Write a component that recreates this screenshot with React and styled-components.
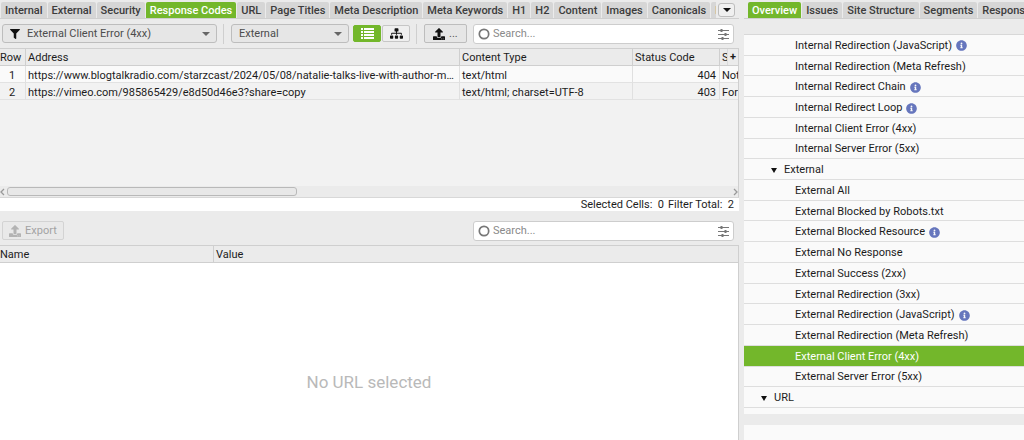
import React, { useState } from "react";
import styled, { createGlobalStyle, css } from "styled-components";
import { FaFilter, FaInfoCircle, FaSitemap, FaUpload } from "react-icons/fa";

const GlobalStyle = createGlobalStyle`
  * {
    box-sizing: border-box;
  }

  body {
    margin: 0;
    background: #ebebeb;
    color: #1c1c1c;
    font-family: Roboto, "Liberation Sans", sans-serif;
    font-size: 11px;
    line-height: 16px;
  }

  button, input, select {
    font: inherit;
    color: inherit;
    margin: 0;
  }
`;

const Layout = styled.div`
  display: flex;
  gap: 5px;
  height: 100vh;
  overflow: hidden;
`;

const MainPane = styled.main`
  flex: 1;
  min-width: 0;
  display: flex;
  flex-direction: column;
`;

const SidePane = styled.aside`
  width: 280px;
  flex-shrink: 0;
  display: flex;
  flex-direction: column;
`;

const TabBar = styled.div`
  display: flex;
  flex-shrink: 0;
  height: 19px;
  padding-top: 2px;
  border-bottom: 1px solid #cfcfcf;
`;

const TabList = styled.div`
  flex: 1;
  min-width: 0;
  display: flex;
  gap: 1px;
  padding-left: ${(props) => props.$inset}px;
  overflow: hidden;
`;

const Tab = styled.button`
  flex-shrink: 0;
  height: 16px;
  padding: 2px 4px 0;
  border: none;
  border-radius: 2px 2px 0 0;
  background: ${(props) => (props.$active ? "#73b72b" : "#d6d6d6")};
  color: ${(props) => (props.$active ? "#fff" : "#3c3c3c")};
  font-weight: 500;
  line-height: 14px;
  white-space: nowrap;
`;

const OverflowButton = styled.button`
  display: flex;
  align-items: center;
  justify-content: center;
  width: 17px;
  height: 14px;
  margin: 1px 4px 0 2px;
  padding: 0;
  border: 1px solid #bdbdbd;
  border-radius: 3px;
  background: #f0f0f0;
`;

const Caret = styled.span`
  flex-shrink: 0;
  border-left: ${(props) => props.$size}px solid transparent;
  border-right: ${(props) => props.$size}px solid transparent;
  border-top: ${(props) => props.$height}px solid ${(props) => props.$color};
`;

const Toolbar = styled.div`
  display: flex;
  align-items: center;
  flex-shrink: 0;
  height: ${(props) => props.$height}px;
  padding: ${(props) => props.$top || 0}px 5px 0 2px;
`;

const SelectBox = styled.label`
  display: flex;
  align-items: center;
  gap: 7px;
  width: ${(props) => props.$width}px;
  height: 19px;
  padding: 0 6px 0 7px;
  border: 1px solid #bdbdbd;
  border-radius: 3px;
  background: #e6e6e6;
  color: #4c4c4c;

  svg {
    color: #111;
    font-size: 10px;
    flex-shrink: 0;
  }
`;

const Select = styled.select`
  flex: 1;
  min-width: 0;
  padding: 0;
  border: none;
  outline: none;
  appearance: none;
  background: transparent;
`;

const Divider = styled.span`
  width: 1px;
  height: 20px;
  margin: 0 7px 0 6px;
  background: #cfcfcf;
`;

const ToggleGroup = styled.div`
  display: flex;
  gap: 1px;
  margin-left: 4px;
`;

const buttonBase = css`
  display: flex;
  align-items: center;
  justify-content: center;
  border-radius: 2px;
`;

const Toggle = styled.button`
  ${buttonBase}
  width: 28px;
  height: 17px;
  padding: 0;
  border: 1px solid ${(props) => (props.$active ? "#73b72b" : "#c6c6c6")};
  background: ${(props) => (props.$active ? "#73b72b" : "#efefef")};
  color: ${(props) => (props.$active ? "#fff" : "#111")};

  svg {
    font-size: 13px;
  }
`;

const ActionButton = styled.button`
  ${buttonBase}
  gap: 4px;
  height: 19px;
  padding: 0 ${(props) => props.$pad}px;
  border: 1px solid #bdbdbd;
  background: #e6e6e6;
  color: #555;

  svg {
    font-size: 12px;
    color: #111;
  }

  &:disabled {
    border-color: #d3d3d3;
    background: #e9e9e9;
    color: #a3a3a3;
  }

  &:disabled svg {
    color: #b3b3b3;
  }
`;

const SearchBox = styled.label`
  display: flex;
  align-items: center;
  gap: 3px;
  width: 261px;
  height: 20px;
  margin-left: auto;
  padding: 0 4px;
  border: 1px solid #cdcdcd;
  border-radius: 3px;
  background: #fff;
  color: #777;
`;

const SearchInput = styled.input`
  flex: 1;
  min-width: 0;
  padding: 0;
  border: none;
  outline: none;
  background: transparent;

  &::placeholder {
    color: #8a8a8a;
    opacity: 1;
  }
`;

const ResultsArea = styled.section`
  position: relative;
  flex-shrink: 0;
  height: 138px;
  border-top: 1px solid #cfcfcf;
  border-right: 1px solid #cfcfcf;
  background: #f2f2f2;
  overflow: hidden;
`;

const Table = styled.table`
  width: 100%;
  table-layout: fixed;
  border-collapse: separate;
  border-spacing: 0;
`;

const HeaderCell = styled.th`
  height: 17px;
  padding: 2px 2px 0;
  border-right: 1px solid #cfcfcf;
  border-bottom: 1px solid #cfcfcf;
  background: #ebebeb;
  font-weight: 400;
  line-height: 14px;
  text-align: left;
  white-space: nowrap;
  overflow: hidden;

  &:first-child {
    padding-left: 0;
  }

  &:last-child {
    border-right: none;
  }
`;

const Cell = styled.td`
  height: 17px;
  padding: 3px 3px 0 2px;
  border-right: 1px solid #e0e0e0;
  border-bottom: 1px solid #e2e2e2;
  background: ${(props) => (props.$alt ? "#f2f2f2" : "#fafafa")};
  line-height: 13px;
  text-align: ${(props) => props.$align || "left"};
  white-space: nowrap;
  overflow: hidden;
  text-overflow: ${(props) => (props.$clip ? "clip" : "ellipsis")};

  &:last-child {
    border-right: none;
  }
`;

const AddColumn = styled.button`
  position: absolute;
  top: 0;
  right: 0;
  width: 11px;
  height: 16px;
  padding: 0;
  border: none;
  border-left: 1px solid #dadada;
  background: #ebebeb;
  font-weight: 700;
  line-height: 14px;
`;

const ScrollBar = styled.div`
  display: flex;
  align-items: center;
  flex-shrink: 0;
  height: 12px;
  border-right: 1px solid #cfcfcf;
  border-bottom: 1px solid #d8d8d8;
  background: #ebebeb;
  color: #999;
`;

const ScrollTrack = styled.div`
  flex: 1;
  margin: 0 2px;
`;

const ScrollThumb = styled.div`
  width: 40%;
  height: 9px;
  border: 1px solid #b9b9b9;
  border-radius: 3px;
  background: #e8e8e8;
`;

const StatusBar = styled.div`
  display: flex;
  justify-content: flex-end;
  align-items: center;
  gap: 4px;
  flex-shrink: 0;
  height: 13px;
  padding-right: 5px;
  background: #fff;
  white-space: pre;
`;

const DetailArea = styled.section`
  flex-shrink: 0;
  border-top: 1px solid #cfcfcf;
  border-right: 1px solid #cfcfcf;
  background: #fff;
`;

const EmptyMessage = styled.p`
  display: flex;
  align-items: center;
  justify-content: center;
  height: 238px;
  margin: 0;
  color: #b9b9b9;
  font-size: 17px;
`;

const TreeHeader = styled.div`
  flex-shrink: 0;
  height: 16px;
  border-bottom: 1px solid #d8d8d8;
`;

const Tree = styled.ul`
  flex: 1;
  display: grid;
  grid-auto-rows: 1fr;
  margin: 0;
  padding: 0;
  list-style: none;
  background: #fafafa;
`;

const TreeRow = styled.li`
  display: flex;
  align-items: center;
  gap: ${(props) => (props.$branch ? 7 : 4)}px;
  padding-top: 2px;
  padding-left: ${(props) => props.$indent}px;
  border-bottom: 1px solid #dedede;
  background: ${(props) => (props.$selected ? "#73b72b" : "#fafafa")};
  color: ${(props) => (props.$selected ? "#fff" : "inherit")};
  white-space: nowrap;

  svg {
    font-size: 11px;
    color: #6676bd;
  }
`;

const TreeEnd = styled.div`
  flex-shrink: 0;
  height: 6px;
  background: #fafafa;
`;

const LowerPanel = styled.div`
  flex-shrink: 0;
  height: 15px;
  margin-top: 11px;
  background: #fafafa;
`;

const mainTabs = [
  "Internal", "External", "Security", "Response Codes", "URL", "Page Titles",
  "Meta Description", "Meta Keywords", "H1", "H2", "Content", "Images",
  "Canonicals", "Pagination",
];

const sideTabs = ["Overview", "Issues", "Site Structure", "Segments", "Response Times"];

const results = [
  {
    url: "https://www.blogtalkradio.com/starzcast/2024/05/08/natalie-talks-live-with-author-marilyn",
    type: "text/html",
    code: 404,
    status: "Not Found",
  },
  {
    url: "https://vimeo.com/985865429/e8d50d46e3?share=copy",
    type: "text/html; charset=UTF-8",
    code: 403,
    status: "Forbidden",
  },
];

const treeItems = [
  { label: "Internal Redirection (JavaScript)", info: true },
  { label: "Internal Redirection (Meta Refresh)" },
  { label: "Internal Redirect Chain", info: true },
  { label: "Internal Redirect Loop", info: true },
  { label: "Internal Client Error (4xx)" },
  { label: "Internal Server Error (5xx)" },
  { label: "External", branch: true, indent: 27 },
  { label: "External All" },
  { label: "External Blocked by Robots.txt" },
  { label: "External Blocked Resource", info: true },
  { label: "External No Response" },
  { label: "External Success (2xx)" },
  { label: "External Redirection (3xx)" },
  { label: "External Redirection (JavaScript)", info: true },
  { label: "External Redirection (Meta Refresh)" },
  { label: "External Client Error (4xx)" },
  { label: "External Server Error (5xx)" },
  { label: "URL", branch: true, indent: 17 },
];

const Tabs = ({ items, initial, inset, label }) => {
  const [active, setActive] = useState(initial);

  return (
    <TabList role="tablist" aria-label={label} $inset={inset}>
      {items.map((item) => (
        <Tab
          key={item}
          role="tab"
          aria-selected={item === active}
          $active={item === active}
          onClick={() => setActive(item)}
        >
          {item}
        </Tab>
      ))}
    </TabList>
  );
};

const Search = ({ label }) => (
  <SearchBox>
    <svg width="12" height="12" viewBox="0 0 12 12" fill="none" stroke="currentColor" strokeWidth="1.7">
      <circle cx="6" cy="6" r="4.7" />
    </svg>
    <SearchInput type="text" placeholder="Search..." aria-label={label} />
    <svg width="11" height="12" viewBox="0 0 11 12" fill="none" stroke="currentColor">
      <path d="M0 2.5h11M0 6.5h11M0 10.5h11" />
      <path d="M3.5 1v3M7.5 5v3M4.5 9v3" strokeWidth="2" />
    </svg>
  </SearchBox>
);

const ListIcon = () => (
  <svg width="13" height="11" viewBox="0 0 13 11" fill="currentColor">
    <path d="M0 0h2v2H0zM3 0h10v2H3zM0 3h2v2H0zM3 3h10v2H3zM0 6h2v2H0zM3 6h10v2H3zM0 9h2v2H0zM3 9h10v2H3z" />
  </svg>
);

const Chevron = ({ d }) => (
  <svg width="5" height="8" viewBox="0 0 5 8" fill="none" stroke="currentColor" strokeWidth="1.3">
    <path d={d} />
  </svg>
);

const App = () => {
  const [view, setView] = useState("list");
  const [selected, setSelected] = useState("External Client Error (4xx)");

  return (
    <>
      <GlobalStyle />
      <Layout>
        <MainPane>
          <TabBar>
            <Tabs items={mainTabs} initial="Response Codes" inset={1} label="Data" />
            <OverflowButton aria-label="More tabs">
              <Caret $size={4} $height={4} $color="#111" />
            </OverflowButton>
          </TabBar>

          <Toolbar $height={29}>
            <SelectBox $width={215}>
              <FaFilter />
              <Select aria-label="Filter">
                <option>External Client Error (4xx)</option>
              </Select>
              <Caret $size={4} $height={4} $color="#666" />
            </SelectBox>
            <Divider />
            <SelectBox $width={118}>
              <Select aria-label="Scope">
                <option>External</option>
              </Select>
              <Caret $size={4} $height={4} $color="#666" />
            </SelectBox>
            <ToggleGroup>
              <Toggle aria-label="List view" $active={view === "list"} onClick={() => setView("list")}>
                <ListIcon />
              </Toggle>
              <Toggle aria-label="Tree view" $active={view === "tree"} onClick={() => setView("tree")}>
                <FaSitemap />
              </Toggle>
            </ToggleGroup>
            <Divider />
            <ActionButton $pad={8} aria-label="Export results">
              <FaUpload />
              ...
            </ActionButton>
            <Search label="Search results" />
          </Toolbar>

          <ResultsArea>
            <Table>
              <colgroup>
                <col width="26" />
                <col />
                <col width="173" />
                <col width="87" />
                <col width="18" />
              </colgroup>
              <thead>
                <tr>
                  <HeaderCell>Row</HeaderCell>
                  <HeaderCell>Address</HeaderCell>
                  <HeaderCell>Content Type</HeaderCell>
                  <HeaderCell>Status Code</HeaderCell>
                  <HeaderCell>Status</HeaderCell>
                </tr>
              </thead>
              <tbody>
                {results.map((row, i) => (
                  <tr key={row.url}>
                    <Cell $alt={i % 2} $align="center">{i + 1}</Cell>
                    <Cell $alt={i % 2}>{row.url}</Cell>
                    <Cell $alt={i % 2}>{row.type}</Cell>
                    <Cell $alt={i % 2} $align="right">{row.code}</Cell>
                    <Cell $alt={i % 2} $clip>{row.status}</Cell>
                  </tr>
                ))}
              </tbody>
            </Table>
            <AddColumn aria-label="Add column">+</AddColumn>
          </ResultsArea>
          <ScrollBar>
            <Chevron d="M4 1L1 4l3 3" />
            <ScrollTrack>
              <ScrollThumb />
            </ScrollTrack>
            <Chevron d="M1 1l3 3-3 3" />
          </ScrollBar>
          <StatusBar>
            <span>Selected Cells:  0</span>
            <span>Filter Total:  2</span>
          </StatusBar>

          <Toolbar $height={34} $top={5}>
            <ActionButton $pad={6} disabled>
              <FaUpload />
              Export
            </ActionButton>
            <Search label="Search details" />
          </Toolbar>
          <DetailArea>
            <Table>
              <colgroup>
                <col width="29%" />
                <col />
              </colgroup>
              <thead>
                <tr>
                  <HeaderCell>Name</HeaderCell>
                  <HeaderCell>Value</HeaderCell>
                </tr>
              </thead>
            </Table>
            <EmptyMessage>No URL selected</EmptyMessage>
          </DetailArea>
        </MainPane>

        <SidePane>
          <TabBar>
            <Tabs items={sideTabs} initial="Overview" inset={4} label="Reports" />
          </TabBar>
          <TreeHeader />
          <Tree>
            {treeItems.map(({ label, info, branch, indent = 51 }) => (
              <TreeRow
                key={label}
                $branch={branch}
                $indent={indent}
                $selected={label === selected}
                onClick={() => setSelected(label)}
              >
                {branch && <Caret $size={3} $height={5} $color="#111" />}
                {label}
                {info && <FaInfoCircle />}
              </TreeRow>
            ))}
          </Tree>
          <TreeEnd />
          <LowerPanel />
        </SidePane>
      </Layout>
    </>
  );
};

export default App;
